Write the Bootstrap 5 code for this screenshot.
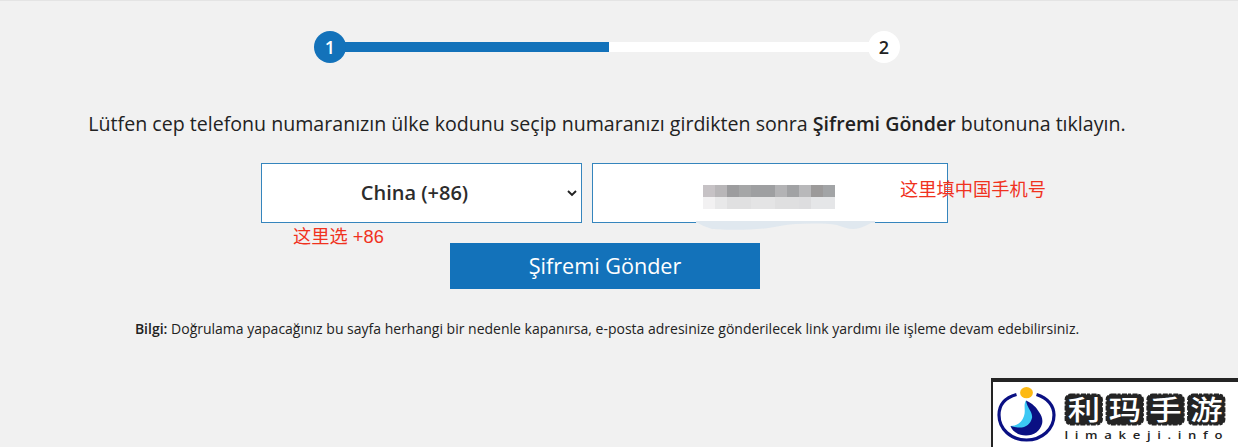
<!DOCTYPE html>
<html lang="tr">
<head>
<meta charset="utf-8">
<meta name="viewport" content="width=device-width, initial-scale=1">
<title>Şifremi Gönder</title>
<link href="https://cdn.jsdelivr.net/npm/bootstrap@5.3.0/dist/css/bootstrap.min.css" rel="stylesheet">
<style>
  body { background: #f1f1f1; color: #222; font-family: "Open Sans", "Noto Sans CJK SC", sans-serif; height: 447px; overflow: hidden; border-top: 1px solid #e4e4e4; }
  .page { width: 1214px; padding-top: 30px; }
  .steps { width: 586px; height: 32px; }
  .step-dot { width: 32px; height: 32px; font-size: 18px; font-weight: 600; line-height: 32px; background: #fff; }
  .step-dot.on { background: #1372ba; color: #fff; }
  .step-line { height: 10px; background: #fff; margin: 0 -3px; }
  .step-line div { width: 266px; height: 10px; background: #1372ba; }
  .lead-text { font-size: 19.6px; line-height: 30px; margin-top: 46px; white-space: nowrap; }
  .fields { height: 60px; margin-top: 24px; gap: 10px; margin-left: 261px; }
  .field { height: 60px; border: 1px solid #3585bd; border-radius: 0; background-color: #fff; }
  .country { width: 321px; font-size: 20px; font-weight: 600; color: #2c2c2c; padding: 0 34px 0 20px; text-align: center; background-image: none; }
  .country-wrap svg { right: 4px; top: 25px; }
  .phone { width: 356px; }
  .phone svg { left: 102px; top: 20px; }
  .note { color: #f0321e; font-family: "Liberation Sans", "Noto Sans CJK SC", sans-serif; font-size: 18.25px; line-height: 24px; white-space: nowrap; }
  .note-country { left: 32px; top: 62px; }
  .note-phone { left: 307px; top: 14px; }
  .send { width: 310px; height: 46px; border-radius: 0; background: #1372ba; color: #fff; font-size: 21.6px; line-height: 46px; padding: 0; border: 0; margin: 20px 0 0 450px; }
  .info { font-size: 14px; line-height: 20px; margin-top: 30px; white-space: nowrap; }
  .fw-semi { font-weight: 600; }
  .brand-box { right: 0; bottom: 0; width: 247px; height: 69px; background: #fff; border-top: 4px solid #242424; border-left: 2px solid #242424; }
</style>
</head>
<body class="position-relative">
<main class="page">
  <div class="steps d-flex align-items-center mx-auto">
    <div class="step-dot on rounded-circle text-center position-relative z-1">1</div>
    <div class="step-line flex-grow-1"><div></div></div>
    <div class="step-dot rounded-circle text-center">2</div>
  </div>
  <p class="lead-text text-center mb-0">Lütfen cep telefonu numaranızın ülke kodunu seçip numaranızı girdikten sonra <span class="fw-semi">Şifremi Gönder</span> butonuna tıklayın.</p>
  <div class="fields d-flex">
    <div class="country-wrap position-relative">
      <select class="form-select field country" aria-label="Ülke kodu"><option>China (+86)</option></select>
      <svg class="position-absolute" width="12" height="10" viewBox="0 0 12 10"><path d="M2 3l4 4 4-4" fill="none" stroke="#222" stroke-width="1.9"/></svg>
      <span class="note note-country position-absolute">这里选 +86</span>
    </div>
    <div class="field phone position-relative">
      <svg class="position-absolute" width="184" height="50" viewBox="0 0 184 50">
        <path d="M1 37H180L170 42C160 47 152 45 142 41C128 39 102 39 85 42C63 47 30 46 17 45Q9 43 1 38Z" fill="#e0e8ef"/>
        <path d="M1 37H180V39H1Z" fill="#e0e8ef"/>
        <g shape-rendering="crispEdges">
        <path d="M8 1h12v12H8z" fill="#c6c2c5"/><path d="M20 1h12v12H20z" fill="#b8b6b8"/><path d="M32 1h12v12H32z" fill="#9c9c9e"/><path d="M44 1h12v12H44z" fill="#a5a6a7"/><path d="M56 1h24v12H56z" fill="#9e9fa1"/><path d="M80 1h12v12H80z" fill="#b3b3b5"/><path d="M92 1h12v12H92z" fill="#a1a2a4"/><path d="M104 1h12v12h-12z" fill="#b8b8ba"/><path d="M116 1h12v12h-12z" fill="#9c9a9a"/><path d="M128 1h12v12h-12z" fill="#a2a4a6"/>
        <path d="M8 13h12v12H8z" fill="#f2f1f2"/><path d="M20 13h12v12H20z" fill="#e8e8e9"/><path d="M32 13h24v12H32z" fill="#e0e0e1"/><path d="M56 13h24v12H56z" fill="#e4e4e5"/><path d="M80 13h24v12H80z" fill="#dfdfe0"/><path d="M104 13h12v12h-12z" fill="#dddddf"/><path d="M116 13h24v12h-24z" fill="#e5e6e8"/>
        </g>
      </svg>
      <span class="note note-phone position-absolute">这里填中国手机号</span>
    </div>
  </div>
  <button class="btn send d-block" type="button">Şifremi Gönder</button>
  <p class="info text-center mb-0"><span class="fw-semi">Bilgi:</span> Doğrulama yapacağınız bu sayfa herhangi bir nedenle kapanırsa, e-posta adresinize gönderilecek link yardımı ile işleme devam edebilirsiniz.</p>
</main>
<div class="brand-box position-absolute">
  <svg class="d-block" width="245" height="65" viewBox="993 382 245 65">
    <path d="M1016.500 394.500C1004 398 999 406 999 415C999 429 1011 440 1026.500 440C1042 440 1054 429 1054 415C1054 406 1048 398 1036.500 394.500" fill="none" stroke="#0a1083" stroke-width="3.200"/>
    <ellipse cx="1026.500" cy="392.700" rx="6.400" ry="5.600" fill="#fdb913"/>
    <path d="M1026 400.500C1033 404 1036 407 1039 412C1042 416 1043 420 1042 424C1040 431 1034 435.500 1026 435.500C1018 435.500 1012 431 1010.500 426C1021 427 1026 420 1026 414Z" fill="#0a1083"/>
    <path d="M1026 400.500C1027 408 1033 412 1032 418C1030 426 1023 430 1010.500 426C1018 425.500 1022 422 1024 416C1026 410 1023 405 1026 400.500Z" fill="#3cc8f4"/>
    <g fill="#242424" stroke="#242424" stroke-width="1.800" stroke-dasharray="5 1 3 1.500">
      <rect x="1065.500" y="394.500" width="36.500" height="30" rx="5"/><rect x="1106.500" y="394.500" width="36.500" height="30" rx="5"/><rect x="1147.300" y="394.500" width="36.500" height="30" rx="5"/><rect x="1188" y="394.500" width="36.500" height="30" rx="5"/>
    </g>
    <g fill="#fff" font-family="Noto Sans CJK SC, sans-serif" font-weight="500" font-size="27" text-anchor="middle" transform="translate(0 419.500)">
      <text transform="translate(1084) scale(1.200 1)">利</text><text transform="translate(1125) scale(1.200 1)">玛</text><text transform="translate(1165.500) scale(1.200 1)">手</text><text transform="translate(1206.500) scale(1.200 1)">游</text>
    </g>
    <text transform="translate(1064.500 438.500) scale(1.250 1)" font-family="Open Sans, sans-serif" font-weight="600" font-size="10.500" fill="#242424" letter-spacing="5.320">limakeji.info</text>
  </svg>
</div>
<script src="https://cdn.jsdelivr.net/npm/bootstrap@5.3.0/dist/js/bootstrap.bundle.min.js"></script>
</body>
</html>
